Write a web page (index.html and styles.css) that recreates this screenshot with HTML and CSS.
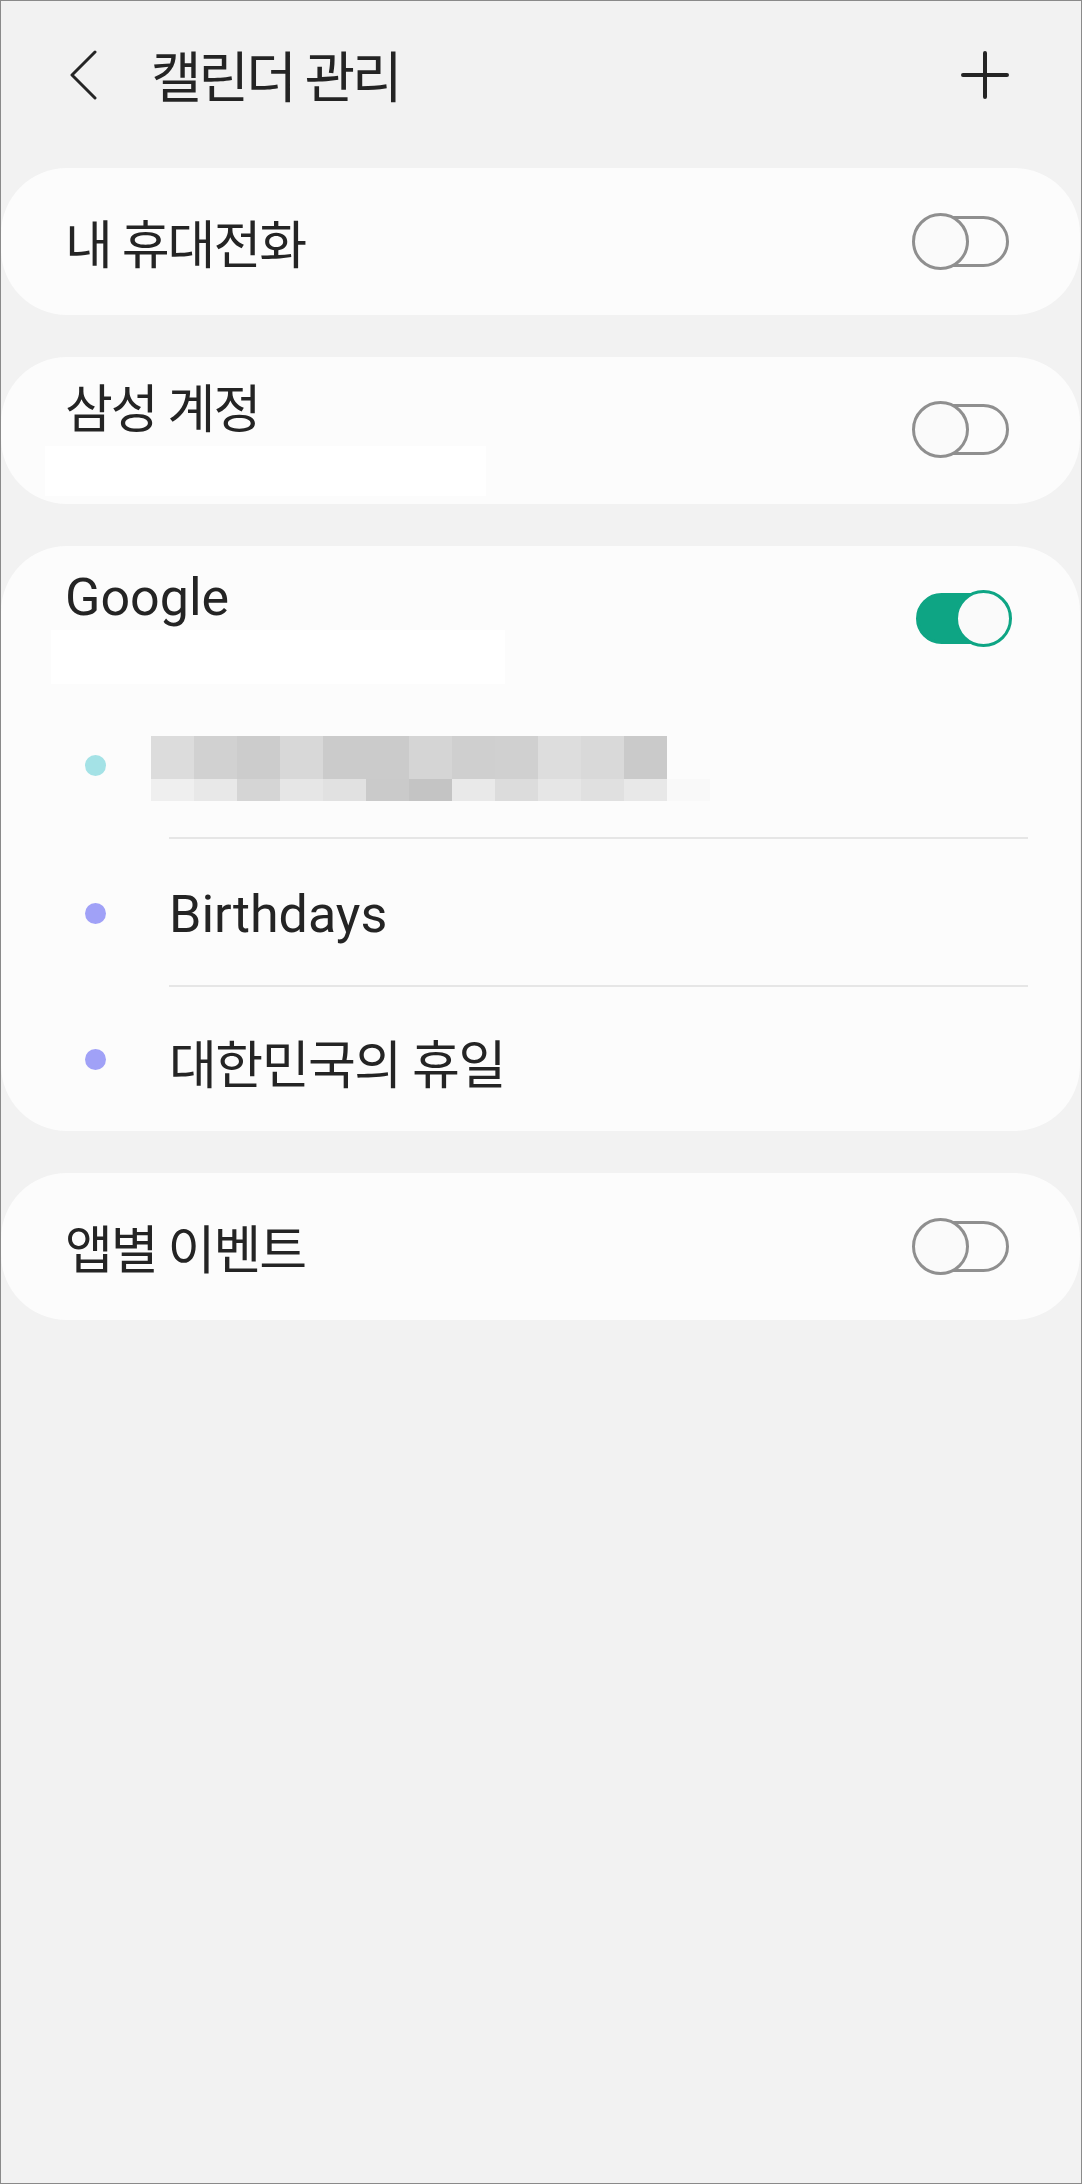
FILE: index.html
```html
<!DOCTYPE html>
<html lang="ko">
<head>
<meta charset="UTF-8">
<meta name="viewport" content="width=device-width, initial-scale=1.0">
<title>캘린더 관리</title>
<link rel="stylesheet" href="styles.css">
</head>
<body>
<div class="screen">
    <div class="top-bar">
        <svg class="back-icon" width="30" height="50" viewBox="0 0 30 50">
            <path d="M26 2 L3 25 L26 48" fill="none" stroke="#252525" stroke-width="3" stroke-linecap="round" stroke-linejoin="round"/>
        </svg>
        <div class="page-title">캘린더 관리</div>
        <svg class="add-icon" width="48" height="48" viewBox="0 0 48 48">
            <path d="M24 2 V46 M2 24 H46" fill="none" stroke="#252525" stroke-width="4" stroke-linecap="round"/>
        </svg>
    </div>

    <div class="card account">
        <div class="account-info">
            <div class="account-name">내 휴대전화</div>
        </div>
        <div class="switch"></div>
    </div>

    <div class="card account two-line">
        <div class="account-info">
            <div class="account-name">삼성 계정</div>
            <div class="masked"></div>
        </div>
        <div class="switch"></div>
    </div>

    <div class="card">
        <div class="account two-line">
            <div class="account-info">
                <div class="account-name latin">Google</div>
                <div class="masked wide"></div>
            </div>
            <div class="switch on"></div>
        </div>
        <div class="cal-list">
            <div class="cal-row">
                <span class="dot" style="background:#a4e2e6"></span>
                <div class="cal-name">
                    <div class="mosaic">
                        <span style="background:#dcdcdc"></span><span style="background:#d1d1d1"></span><span style="background:#cccccc"></span><span style="background:#d8d8d8"></span><span style="background:#cbcbcb"></span><span style="background:#cbcbcb"></span><span style="background:#d5d5d5"></span><span style="background:#cfcfcf"></span><span style="background:#d0d0d0"></span><span style="background:#dddddd"></span><span style="background:#d9d9d9"></span><span style="background:#cacaca"></span><span></span>
                        <span style="background:#efefef"></span><span style="background:#e8e8e8"></span><span style="background:#d5d5d5"></span><span style="background:#e6e6e6"></span><span style="background:#e1e1e1"></span><span style="background:#cacaca"></span><span style="background:#c4c4c4"></span><span style="background:#e9e9e9"></span><span style="background:#dcdcdc"></span><span style="background:#e6e6e6"></span><span style="background:#e0e0e0"></span><span style="background:#e8e8e8"></span><span style="background:#f9f9f9"></span>
                    </div>
                </div>
            </div>
            <div class="cal-row">
                <span class="dot" style="background:#a0a1f7"></span>
                <div class="cal-name latin">Birthdays</div>
            </div>
            <div class="cal-row">
                <span class="dot" style="background:#a0a1f7"></span>
                <div class="cal-name">대한민국의 휴일</div>
            </div>
        </div>
    </div>

    <div class="card account">
        <div class="account-info">
            <div class="account-name">앱별 이벤트</div>
        </div>
        <div class="switch"></div>
    </div>
</div>
</body>
</html>
```

FILE: styles.css
```css
html, body {
    margin: 0;
    padding: 0;
}
body {
    font-family: Roboto, "Noto Sans CJK KR", sans-serif;
    color: #242424;
}
.screen {
    width: 1082px;
    height: 2184px;
    box-sizing: border-box;
    border: 1px solid #8a8a8a;
    background-color: #f2f2f2;
    overflow: hidden;
}
.top-bar {
    display: flex;
    align-items: center;
    height: 50px;
    padding: 49px 72px 68px 68px;
}
.back-icon {
    flex: none;
}
.page-title {
    flex: 1;
    margin: 5px 0 0 52px;
    font-size: 55px;
    line-height: 50px;
    letter-spacing: -3px;
}
.add-icon {
    flex: none;
}
.card {
    background-color: #fcfcfc;
    border-radius: 66px;
    margin: 0 1px 42px 0;
}
.account {
    display: flex;
    align-items: center;
    min-height: 147px;
    box-sizing: border-box;
    padding: 0 71px 0 64px;
}
.account-info {
    flex: 1;
}
.account-name {
    font-size: 52px;
    line-height: 60px;
    letter-spacing: -2px;
    padding-top: 5px;
    margin-bottom: -5px;
}
.account-name.latin {
    letter-spacing: 0;
    padding-top: 3px;
    margin-bottom: -3px;
}
.masked {
    width: 441px;
    height: 50px;
    margin: 10px 0 0 -20px;
    background-color: #fff;
}
.masked.wide {
    width: 454px;
    height: 54px;
    margin: 5px 0 0 -14px;
}
.two-line {
    align-items: flex-start;
    padding-top: 19px;
    padding-bottom: 8px;
}
.two-line .switch {
    margin-top: 25px;
}
.card > .two-line {
    min-height: 0;
    padding-bottom: 0;
}
.switch {
    position: relative;
    flex: none;
    width: 97px;
    height: 57px;
}
.switch::before {
    content: "";
    position: absolute;
    left: 4px;
    right: 0;
    top: 3px;
    bottom: 3px;
    box-sizing: border-box;
    border: 3px solid #8f8f8f;
    border-radius: 26px;
}
.switch::after {
    content: "";
    position: absolute;
    left: 0;
    top: 0;
    width: 57px;
    height: 57px;
    box-sizing: border-box;
    border: 3px solid #8f8f8f;
    border-radius: 50%;
    background-color: #fafafa;
}
.switch.on::before {
    background-color: #0ea584;
    border-color: #0ea584;
    right: 4px;
}
.switch.on::after {
    left: auto;
    right: -3px;
    border-color: #0ea584;
}
.cal-list {
    padding-top: 7px;
}
.cal-row {
    display: flex;
    align-items: stretch;
    height: 148px;
}
.cal-row:last-child {
    height: 144px;
}
.dot {
    flex: none;
    align-self: center;
    width: 21px;
    height: 21px;
    border-radius: 50%;
    margin: 0 63px 0 84px;
}
.cal-name {
    flex: 1;
    display: flex;
    align-items: center;
    margin-right: 52px;
    padding-top: 5px;
    border-bottom: 2px solid #e6e6e6;
    font-size: 52px;
    letter-spacing: -1.5px;
}
.cal-name.latin {
    letter-spacing: 0;
}
.cal-row:last-child .cal-name {
    border-bottom: none;
}
.cal-row:first-child .cal-name {
    padding-top: 0;
}
.mosaic {
    display: grid;
    grid-template-columns: repeat(13, 43px);
    grid-template-rows: 43px 22px;
    margin: 8px 0 0 -18px;
}
```
